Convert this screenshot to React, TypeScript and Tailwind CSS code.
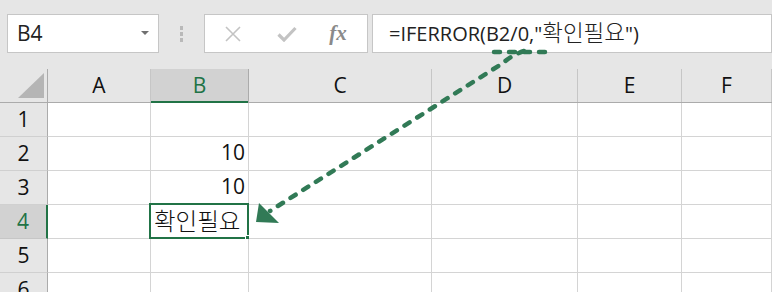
import React from "react";

const COLS = [
  { key: "A", w: "w-[103px]" },
  { key: "B", w: "w-[98px]" },
  { key: "C", w: "w-[183px]" },
  { key: "D", w: "w-[146px]" },
  { key: "E", w: "w-[104px]" },
  { key: "F", w: "w-[90px]" },
];

const ROWS: { n: number; b?: string }[] = [
  { n: 1 },
  { n: 2, b: "10" },
  { n: 3, b: "10" },
  { n: 4, b: "확인필요" },
  { n: 5 },
  { n: 6 },
];

const font = "font-['Open_Sans','Noto_Sans_CJK_KR',sans-serif]";

const Toolbar = () => (
  <div className="h-[69px] flex items-start pt-[14px] pl-[7px]">
    {/* name box */}
    <div className="w-[152px] h-[39px] bg-white border border-[#c6c6c6] flex items-center justify-between pl-[9px] pr-[9px]">
      <span className="text-[21px] text-[#222] leading-none">B4</span>
      <svg width="8" height="5" viewBox="0 0 8 5">
        <path d="M0 0 L8 0 L4 4 Z" fill="#707070" />
      </svg>
    </div>
    {/* grip dots */}
    <div className="w-[45px] h-[39px] flex flex-col items-center justify-center gap-[2px]">
      <span className="w-[3px] h-[4px] bg-[#b9b9b9]" />
      <span className="w-[3px] h-[4px] bg-[#b9b9b9]" />
      <span className="w-[3px] h-[4px] bg-[#b9b9b9]" />
    </div>
    {/* cancel / enter / fx */}
    <div className="w-[164px] h-[39px] bg-white border border-[#c6c6c6] flex items-center">
      <div className="w-[54px] flex justify-center pl-[2px]">
        <svg width="16" height="16" viewBox="0 0 16 16">
          <path d="M1 1 L15 15 M15 1 L1 15" stroke="#c3c3c3" strokeWidth="1.6" />
        </svg>
      </div>
      <div className="w-[54px] flex justify-center pl-[2px]">
        <svg width="20" height="16" viewBox="0 0 20 16">
          <path d="M1.5 8.5 L7 14 L18.5 2" stroke="#c3c3c3" strokeWidth="3.2" fill="none" />
        </svg>
      </div>
      <div className="flex-1 flex justify-center pr-[4px]">
        <span className="font-['Liberation_Serif',serif] italic font-bold text-[21px] text-[#8a8a8a] leading-none">
          fx
        </span>
      </div>
    </div>
    {/* formula */}
    <div className="ml-[4px] w-[400px] h-[39px] bg-white border border-[#c6c6c6] flex items-center pl-[16px]">
      <span className="text-[20px] text-[#222] leading-none whitespace-nowrap">
        =IFERROR(B2/0,"<span className="text-[22.5px] font-light">확인필요</span>")
      </span>
    </div>
  </div>
);

const HeaderRow = () => (
  <div className="flex h-[34px] border-b border-[#ababab]">
    <div className="w-[48px] shrink-0 border-r border-[#ababab] relative">
      <svg className="absolute left-[18px] top-[4px]" width="27" height="26" viewBox="0 0 27 26">
        <path d="M26 0 L26 25 L0 25 Z" fill="#b5b5b5" />
      </svg>
    </div>
    {COLS.map((c) =>
      c.key === "B" ? (
        <div
          key={c.key}
          className={`${c.w} shrink-0 bg-[#d2d2d2] border-r border-[#ababab] relative flex items-center justify-center text-[21px] text-[#217346]`}
        >
          {c.key}
          <span className="absolute left-0 right-0 -bottom-[1px] h-[2px] bg-[#217346]" />
        </div>
      ) : (
        <div
          key={c.key}
          className={`${c.w} shrink-0 border-r border-[#c6c6c6] flex items-center justify-center text-[21px] text-[#111]`}
        >
          {c.key}
        </div>
      )
    )}
  </div>
);

const DataRow = ({ n, b }: { n: number; b?: string }) => {
  const sel = n === 4;
  return (
    <div className="flex h-[34px]">
      <div
        className={`w-[48px] shrink-0 h-[34px] flex items-center justify-center text-[21px] border-b ${
          sel
            ? "bg-[#d2d2d2] text-[#217346] border-[#c6c6c6] border-r-2 border-r-[#217346]"
            : "bg-[#e6e6e6] text-[#111] border-[#d0d0d0] border-r border-r-[#ababab]"
        }`}
      >
        {n}
      </div>
      {COLS.map((c) => (
        <div
          key={c.key}
          className={`${c.w} shrink-0 h-[34px] bg-white border-r border-b border-[#d4d4d4] relative`}
        >
          {c.key === "B" && b && (
            <div
              className={`h-full flex items-end text-[#111] whitespace-nowrap ${
                sel
                  ? "justify-start pl-[3px] pb-[1px] text-[23.5px] font-light leading-[32px]"
                  : "justify-end pr-[3px] pb-[2px] text-[21px]"
              }`}
            >
              {b}
            </div>
          )}
          {c.key === "B" && sel && (
            <>
              <span className="absolute -left-[2px] -top-[2px] w-[100px] h-[36px] border-2 border-[#217346]" />
              <span className="absolute -right-[4px] -bottom-[4px] w-[7px] h-[7px] bg-[#217346] border border-white" />
            </>
          )}
        </div>
      ))}
    </div>
  );
};

const Arrow = () => (
  <svg className="absolute inset-0 pointer-events-none" width="772" height="292" viewBox="0 0 772 292">
    <g stroke="#317a56" strokeWidth="4.5" strokeLinecap="round" fill="none" strokeDasharray="6 9">
      <path d="M494 52 L546 52" />
      <path d="M524 51 Q512 55 503 63 L270 211" />
    </g>
    <path d="M256 222 L259 203 L268 212 L279 223 Z" fill="#317a56" />
  </svg>
);

export default function App() {
  return (
    <div className={`w-[772px] h-[292px] overflow-hidden bg-[#e6e6e6] relative ${font}`}>
      <Toolbar />
      <HeaderRow />
      {ROWS.map((r) => (
        <DataRow key={r.n} n={r.n} b={r.b} />
      ))}
      <Arrow />
    </div>
  );
}
